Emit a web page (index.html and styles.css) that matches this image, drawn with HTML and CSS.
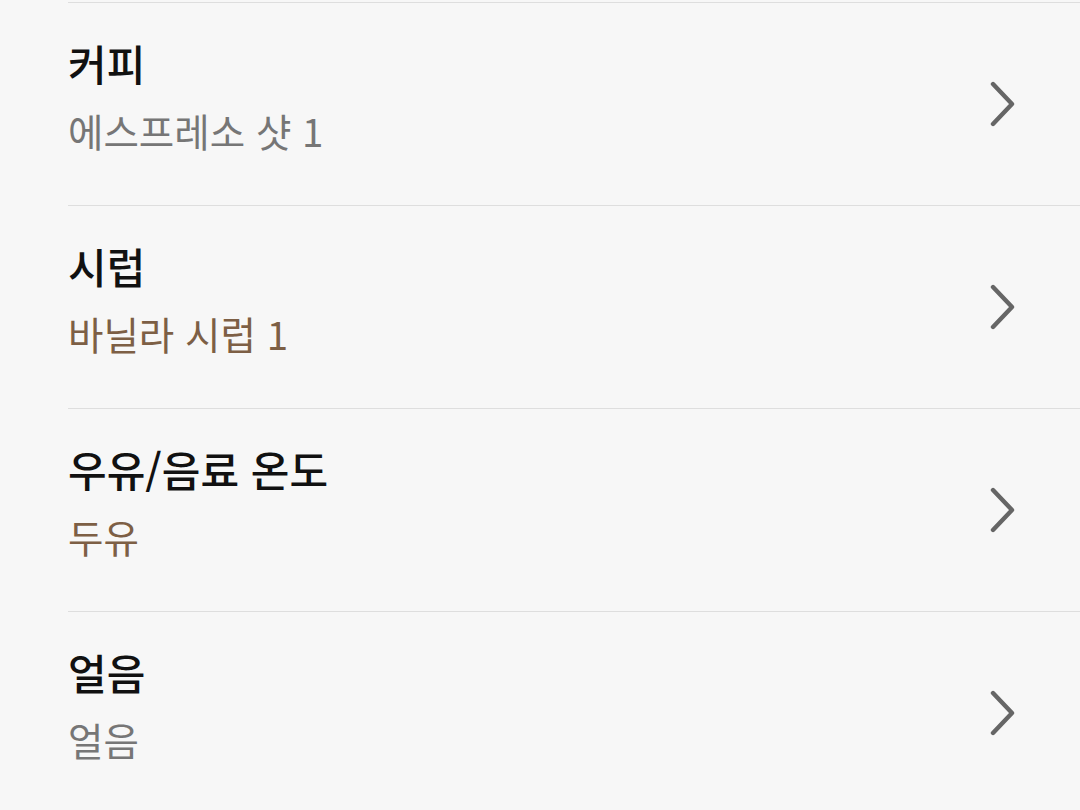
FILE: index.html
```html
<!DOCTYPE html>
<html lang="ko">
<head>
<meta charset="utf-8">
<link rel="stylesheet" href="styles.css">
</head>
<body>
<ul class="options">
  <li class="option">
    <div class="texts">
      <div class="title">커피</div>
      <div class="value">에스프레소 샷 1</div>
    </div>
    <svg class="chev" viewBox="0 0 26 46" width="26" height="46"><path d="M3 3 L22 23 L3 43" fill="none" stroke="currentColor" stroke-width="4.4" stroke-linecap="round" stroke-linejoin="round"/></svg>
  </li>
  <li class="option">
    <div class="texts">
      <div class="title">시럽</div>
      <div class="value changed">바닐라 시럽 1</div>
    </div>
    <svg class="chev" viewBox="0 0 26 46" width="26" height="46"><path d="M3 3 L22 23 L3 43" fill="none" stroke="currentColor" stroke-width="4.4" stroke-linecap="round" stroke-linejoin="round"/></svg>
  </li>
  <li class="option">
    <div class="texts">
      <div class="title">우유/음료 온도</div>
      <div class="value changed">두유</div>
    </div>
    <svg class="chev" viewBox="0 0 26 46" width="26" height="46"><path d="M3 3 L22 23 L3 43" fill="none" stroke="currentColor" stroke-width="4.4" stroke-linecap="round" stroke-linejoin="round"/></svg>
  </li>
  <li class="option">
    <div class="texts">
      <div class="title">얼음</div>
      <div class="value">얼음</div>
    </div>
    <svg class="chev" viewBox="0 0 26 46" width="26" height="46"><path d="M3 3 L22 23 L3 43" fill="none" stroke="currentColor" stroke-width="4.4" stroke-linecap="round" stroke-linejoin="round"/></svg>
  </li>
</ul>
</body>
</html>
```
FILE: styles.css
```css
html, body {
  margin: 0;
  padding: 0;
  background: #f7f7f7;
  height: 100%;
  overflow: hidden;
}
body {
  font-family: "Noto Sans CJK KR", "Noto Sans", sans-serif;
  padding-top: 2px;
}
.options {
  list-style: none;
  margin: 0;
  padding: 0 0 0 68px;
}
.option {
  display: flex;
  align-items: flex-start;
  justify-content: space-between;
  border-top: 1.5px solid #dedede;
  height: 203px;
  box-sizing: border-box;
  padding: 34px 64px 0 0;
}
.texts {
  display: flex;
  flex-direction: column;
  gap: 15px;
}
.title {
  font-size: 42px;
  font-weight: 500;
  line-height: 52px;
  color: #111111;
}
.value {
  font-size: 38.5px;
  font-weight: 400;
  line-height: 52px;
  color: #767676;
}
.value.changed {
  color: #7d5f45;
}
.chev {
  color: #666666;
  display: block;
  margin-top: 44px;
}
```
